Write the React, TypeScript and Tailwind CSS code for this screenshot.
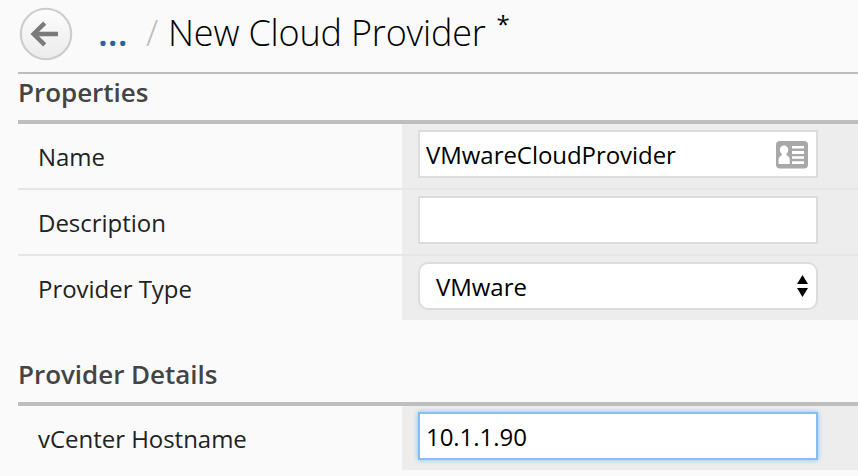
import type { ReactNode } from 'react';

function BackButton() {
  return (
    <svg className="block h-[54px] w-[54px] shrink-0" viewBox="0 0 54 54" fill="none">
      <defs>
        <linearGradient id="back" x1="0" y1="0" x2="0" y2="1">
          <stop offset="0" stopColor="#fdfdfd" />
          <stop offset="1" stopColor="#ebebeb" />
        </linearGradient>
      </defs>
      <circle cx="27" cy="27" r="25.2" fill="url(#back)" stroke="#cccccc" strokeWidth="2.1" />
      <path d="M39 27H15.5M25.7 16.2L14.6 27l11.1 10.8" stroke="#7a7a7a" strokeWidth="4.4" />
    </svg>
  );
}

function ContactCard() {
  return (
    <svg className="mt-px block h-7 w-8" viewBox="0 0 32 28">
      <rect width="32" height="27.5" rx="4" fill="#a8a8a8" />
      <path
        d="M8 4.5c2.6 0 4.2 1.8 4.2 4.2 0 1.8-.7 3.2-1.7 4v1.5c1.9.6 3.3 2.3 3.3 4.8v4H2.600v-4c0-2.500 1.300-4.200 3.200-4.800v-1.500c-1.100-.8-1.900-2.200-1.900-4C3.900 6.300 5.500 4.500 8 4.500z"
        fill="#fff"
      />
      <path d="M16 5h12v2.500H16zM16 10h12v3H16zM16 15.200h12v2.500H16zM16 20.200h12v2.800H16z" fill="#fff" />
    </svg>
  );
}

function Section({ title, className, children }: { title: string; className: string; children: ReactNode }) {
  return (
    <section className={className}>
      <h2 className="h-[50px] border-b-4 border-[#bebebe] text-[26px] font-semibold leading-[37px] tracking-[-0.03px] text-[#444]">
        {title}
      </h2>
      {children}
    </section>
  );
}

function Row({ label, last, children }: { label: string; last?: boolean; children: ReactNode }) {
  return (
    <div className={last ? 'flex h-16' : 'flex h-[66px] border-b-2 border-[#e6e6e6]'}>
      <div className="w-96 shrink-0 pl-5 text-2xl leading-[66px] tracking-[-0.03px] text-[#222]">{label}</div>
      <div className="grow bg-[#ededed] pl-4 pt-1.5">{children}</div>
    </div>
  );
}

const field =
  'flex h-12 w-[400px] items-center justify-between border-2 bg-white text-2xl tracking-[-0.05px] text-black';

export default function App() {
  return (
    <main className="h-[476px] w-[858px] overflow-hidden bg-[#fafafa] pl-[18px] font-['Open_Sans','Noto_Sans',sans-serif]">
      <header className="flex h-[74px] border-b-2 border-[#bebebe] pl-px pt-[7px]">
        <BackButton />
        <span className="ml-[25px] w-[48px] text-4xl font-semibold leading-[51px] text-[#2a6496]">...</span>
        <span className="w-[22px] text-4xl font-light leading-[51px] text-[#bbb]">/</span>
        <h1 className="text-4xl font-light leading-[51px] tracking-[-0.18px] text-black">New Cloud Provider</h1>
        <span className="ml-[11px] text-2xl leading-[34px] text-black">*</span>
      </header>
      <Section title="Properties" className="h-[246px]">
        <Row label="Name">
          <div className={field + ' border-[#dcdcdc] pl-1.5 pr-2'}>
            <span className="pt-0.5">VMwareCloudProvider</span>
            <ContactCard />
          </div>
        </Row>
        <Row label="Description">
          <div className={field + ' border-[#dcdcdc]'} />
        </Row>
        <Row label="Provider Type" last>
          <div className={field + ' rounded-[10px] border-[#dcdcdc] pl-4 pr-2'}>
            <span className="pt-0.5">VMware</span>
            <svg className="h-[22px] w-[11px]" viewBox="0 0 11 22">
              <path d="M5.500 0L11 9H0zM0 13h11l-5.500 9z" />
            </svg>
          </div>
        </Row>
      </Section>
      <Section title="Provider Details" className="pt-9">
        <Row label="vCenter Hostname" last>
          <div className={field + ' border-[#85bdf1] pl-1.5 shadow-[0_0_5px_#85bdf1]'}>
            <span className="pt-0.5">10.1.1.90</span>
          </div>
        </Row>
      </Section>
    </main>
  );
}
